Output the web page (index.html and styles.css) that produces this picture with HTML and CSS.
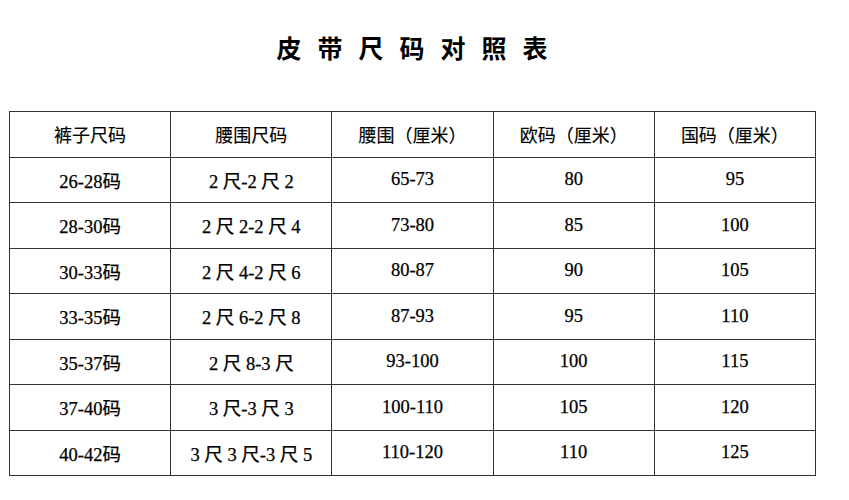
FILE: index.html
```html
<!DOCTYPE html>
<html lang="zh">
<head>
<meta charset="utf-8">
<link rel="stylesheet" href="styles.css">
</head>
<body>
<h1 class="title">皮带尺码对照表</h1>
<table class="size-table">
  <thead>
    <tr><th>裤子尺码</th><th>腰围尺码</th><th>腰围（厘米）</th><th>欧码（厘米）</th><th>国码（厘米）</th></tr>
  </thead>
  <tbody>
    <tr><td>26-28码</td><td>2 尺-2 尺 2</td><td>65-73</td><td>80</td><td>95</td></tr>
    <tr><td>28-30码</td><td>2 尺 2-2 尺 4</td><td>73-80</td><td>85</td><td>100</td></tr>
    <tr><td>30-33码</td><td>2 尺 4-2 尺 6</td><td>80-87</td><td>90</td><td>105</td></tr>
    <tr><td>33-35码</td><td>2 尺 6-2 尺 8</td><td>87-93</td><td>95</td><td>110</td></tr>
    <tr><td>35-37码</td><td>2 尺 8-3 尺</td><td>93-100</td><td>100</td><td>115</td></tr>
    <tr><td>37-40码</td><td>3 尺-3 尺 3</td><td>100-110</td><td>105</td><td>120</td></tr>
    <tr><td>40-42码</td><td>3 尺 3 尺-3 尺 5</td><td>110-120</td><td>110</td><td>125</td></tr>
  </tbody>
</table>
</body>
</html>
```
FILE: styles.css
```css
html, body {
  margin: 0;
  padding: 0;
  background: #ffffff;
}
body {
  padding: 0 0 0 9px;
  font-family: "Liberation Serif", "Noto Sans CJK SC", serif;
  color: #000;
}
.title {
  margin: 0;
  padding-top: 31px;
  height: 80px;
  box-sizing: border-box;
  width: 806px;
  text-align: center;
  font-family: "Noto Sans CJK SC", sans-serif;
  font-size: 25px;
  line-height: 32px;
  font-weight: 700;
  letter-spacing: 16px;
  text-indent: 16px;
  color: #000;
}
.size-table {
  margin-top: 31px;
  border-collapse: collapse;
  width: 807px;
  table-layout: fixed;
}
.size-table th,
.size-table td {
  border: 1px solid #333333;
  height: 44.5px;
  padding: 0;
  text-align: center;
  vertical-align: middle;
  font-size: 18.5px;
  font-weight: 400;
  color: #000;
  -webkit-text-stroke: 0.25px #000;
}
.size-table th {
  font-family: "Noto Sans CJK SC", sans-serif;
  font-size: 18px;
  -webkit-text-stroke: 0.15px #000;
}
```
